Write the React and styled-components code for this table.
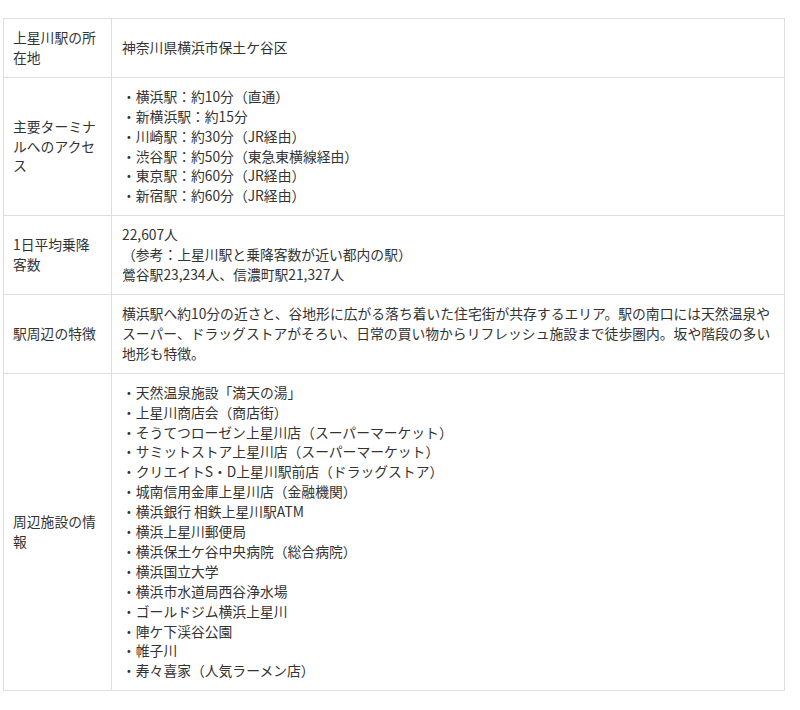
import React from 'react'
import styled, { createGlobalStyle } from 'styled-components'

const GlobalStyle = createGlobalStyle`
  html, body {
    margin: 0;
    padding: 0;
    background: #fff;
  }
  body {
    font-family: "Noto Sans CJK JP", "Noto Sans", sans-serif;
    color: #333;
  }
`;

const Page = styled.div`
  width: 782px;
  padding: 18px 0 0 3px;
`;

const Table = styled.table`
  width: 100%;
  border-collapse: collapse;
  table-layout: fixed;
  font-size: 13.8px;
  line-height: 19.9px;
`;

const LabelCell = styled.th`
  width: 108px;
  box-sizing: border-box;
  padding: 9px 10px 9px 9px;
  border: 1px solid #dedede;
  font-weight: 400;
  text-align: left;
  vertical-align: middle;
`;

const ValueCell = styled.td`
  padding: 9px 10px;
  border: 1px solid #dedede;
  vertical-align: middle;
  white-space: ${p => (p.$nowrap ? 'nowrap' : 'normal')};
`;

const Line = styled.div``;

const rows = [
  {
    label: '上星川駅の所在地',
    lines: ['神奈川県横浜市保土ケ谷区'],
  },
  {
    label: '主要ターミナルへのアクセス',
    lines: [
      '・横浜駅：約10分（直通）',
      '・新横浜駅：約15分',
      '・川崎駅：約30分（JR経由）',
      '・渋谷駅：約50分（東急東横線経由）',
      '・東京駅：約60分（JR経由）',
      '・新宿駅：約60分（JR経由）',
    ],
  },
  {
    label: '1日平均乗降客数',
    lines: [
      '22,607人',
      '（参考：上星川駅と乗降客数が近い都内の駅）',
      '鶯谷駅23,234人、信濃町駅21,327人',
    ],
  },
  {
    label: '駅周辺の特徴',
    lines: [
      '横浜駅へ約10分の近さと、谷地形に広がる落ち着いた住宅街が共存するエリア。駅の南口には天然温泉や',
      'スーパー、ドラッグストアがそろい、日常の買い物からリフレッシュ施設まで徒歩圏内。坂や階段の多い',
      '地形も特徴。',
    ],
  },
  {
    label: '周辺施設の情報',
    lines: [
      '・天然温泉施設「満天の湯」',
      '・上星川商店会（商店街）',
      '・そうてつローゼン上星川店（スーパーマーケット）',
      '・サミットストア上星川店（スーパーマーケット）',
      '・クリエイトS・D上星川駅前店（ドラッグストア）',
      '・城南信用金庫上星川店（金融機関）',
      '・横浜銀行 相鉄上星川駅ATM',
      '・横浜上星川郵便局',
      '・横浜保土ケ谷中央病院（総合病院）',
      '・横浜国立大学',
      '・横浜市水道局西谷浄水場',
      '・ゴールドジム横浜上星川',
      '・陣ケ下渓谷公園',
      '・帷子川',
      '・寿々喜家（人気ラーメン店）',
    ],
  },
];

export default function App() {
  return (
    <Page>
      <GlobalStyle />
      <Table>
        <tbody>
          {rows.map((row, index) => (
            <tr key={index}>
              <LabelCell>{row.label}</LabelCell>
              <ValueCell $nowrap>
                {row.lines.map((line, i) => (
                  <Line key={i}>{line}</Line>
                ))}
              </ValueCell>
            </tr>
          ))}
        </tbody>
      </Table>
    </Page>
  )
}
